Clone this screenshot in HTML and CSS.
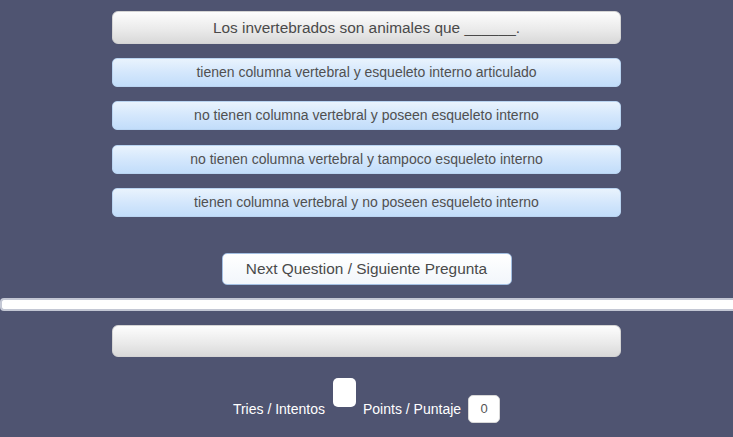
FILE: index.html
```html
<!DOCTYPE html>
<html lang="es">
<head>
<meta charset="utf-8">
<title>Quiz</title>
<link rel="stylesheet" href="styles.css">
</head>
<body>
<main class="quiz">
  <div class="question">Los invertebrados son animales que ______.</div>
  <div class="options">
    <div class="option">tienen columna vertebral y esqueleto interno articulado</div>
    <div class="option">no tienen columna vertebral y poseen esqueleto interno</div>
    <div class="option">no tienen columna vertebral y tampoco esqueleto interno</div>
    <div class="option">tienen columna vertebral y no poseen esqueleto interno</div>
  </div>
  <div class="next-wrap"><button class="next">Next Question / Siguiente Pregunta</button></div>
</main>
<div class="separator"></div>
<section class="results">
  <div class="feedback"></div>
  <div class="score">
    <span class="label label-tries">Tries / Intentos</span>
    <span class="box box-tries"></span>
    <span class="label label-points">Points / Puntaje</span>
    <span class="box box-points">0</span>
  </div>
</section>
</body>
</html>
```

FILE: styles.css
```css
html, body {
  margin: 0;
  padding: 0;
  background: #4f5471;
  font-family: "Liberation Sans", Arial, sans-serif;
  overflow: hidden;
}

.quiz {
  width: 509px;
  margin: 0 auto;
  padding-top: 11px;
  display: flex;
  flex-direction: column;
}

.question {
  height: 33px;
  box-sizing: border-box;
  border: 1px solid #d4d4d4;
  border-radius: 6px;
  background: linear-gradient(#fdfdfd, #e9e9e9 60%, #d9d9d9);
  color: #4a4a4a;
  font-size: 15.4px;
  line-height: 31px;
  text-align: center;
}

.options {
  margin-top: 14px;
  display: flex;
  flex-direction: column;
  gap: 14.33px;
}

.option {
  height: 29px;
  box-sizing: border-box;
  border: 1px solid #b9d4f1;
  border-radius: 5px;
  background: linear-gradient(#e9f3fd, #d4e7fc 50%, #c2ddfa);
  color: #505050;
  font-size: 14px;
  line-height: 27px;
  text-align: center;
}

.next-wrap {
  margin-top: 36px;
  display: flex;
  justify-content: center;
}

.next {
  width: 290px;
  height: 32px;
  box-sizing: border-box;
  border: 1px solid #a3bfe2;
  border-radius: 5px;
  background: linear-gradient(#ffffff, #f2f6fb);
  color: #4a4a4a;
  font-family: "Liberation Sans", Arial, sans-serif;
  font-size: 15.4px;
  padding: 0;
}

.separator {
  margin: 13px -10px 0 0;
  height: 13px;
  box-sizing: border-box;
  background: #ffffff;
  border: 2px solid #c3c7d4;
  border-right: none;
  border-radius: 4px 0 0 4px;
}

.results {
  width: 509px;
  margin: 0 auto;
  padding-top: 14px;
}

.feedback {
  height: 32px;
  box-sizing: border-box;
  border: 1px solid #d4d4d4;
  border-radius: 6px;
  background: linear-gradient(#fdfdfd, #e9e9e9 60%, #d9d9d9);
}

.score {
  margin-top: 21px;
  display: flex;
  justify-content: center;
  align-items: flex-start;
  color: #ffffff;
  font-size: 14px;
  line-height: 16px;
}

.label {
  margin-top: 23px;
}

.box {
  background: #ffffff;
  border-radius: 5px;
  box-sizing: border-box;
  color: #555;
  text-align: center;
}

.box-tries {
  width: 23px;
  height: 29px;
  margin: 0 7px 0 8px;
}

.box-points {
  width: 32px;
  height: 28px;
  margin: 17px 0 0 7px;
  font-size: 13px;
  border: 1px solid #d8d8d8;
  line-height: 26px;
}
```
